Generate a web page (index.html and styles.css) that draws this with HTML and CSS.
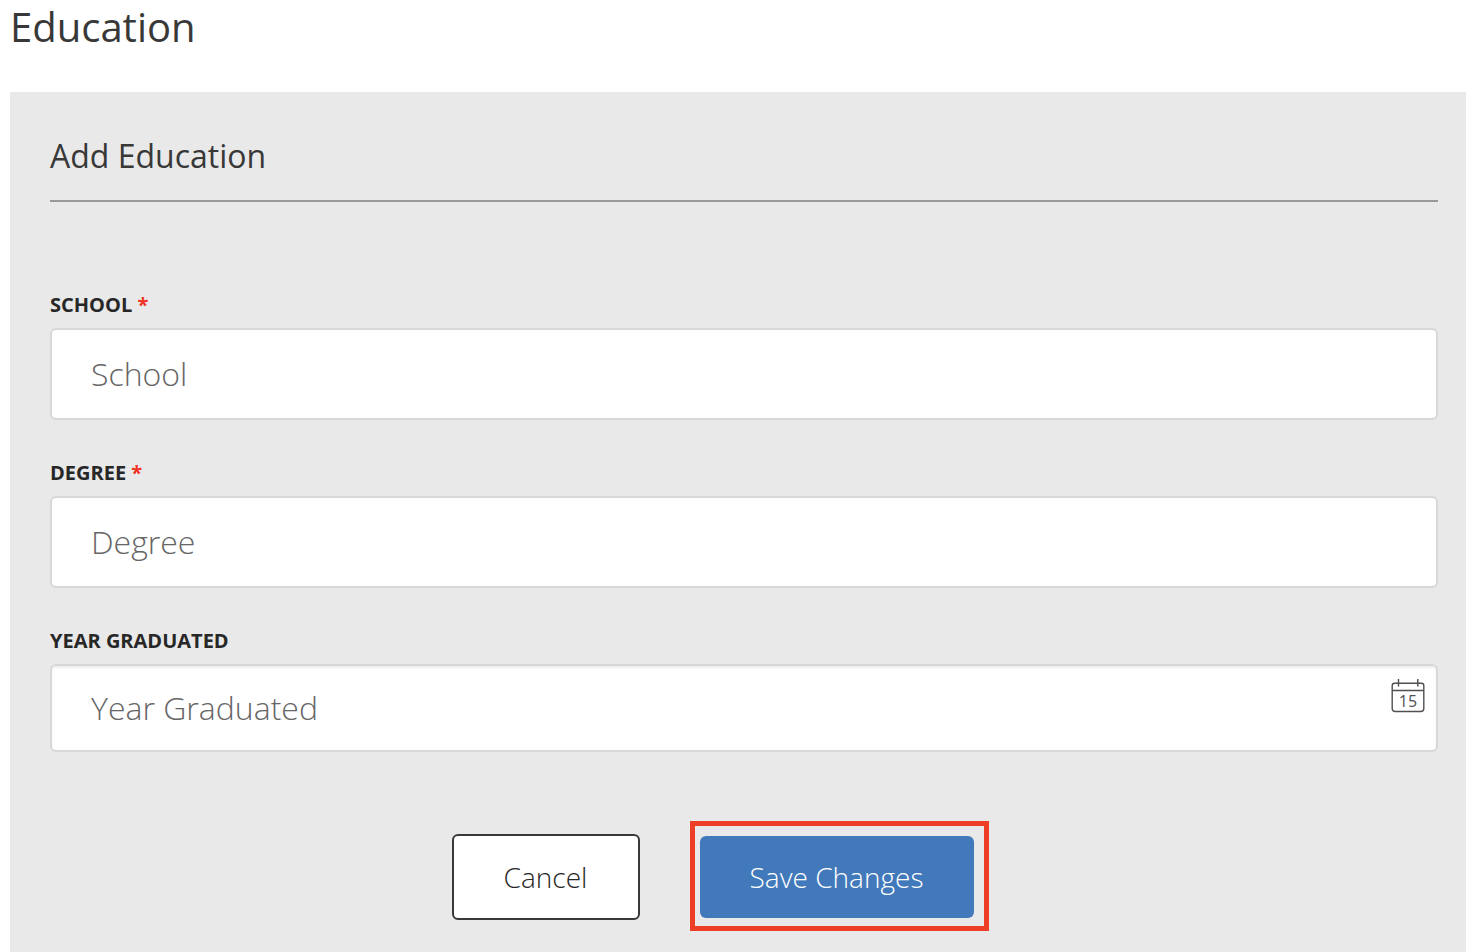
FILE: index.html
```html
<!DOCTYPE html>
<html lang="en">
<head>
<meta charset="utf-8">
<title>Education</title>
<link rel="stylesheet" href="styles.css">
</head>
<body>
<main class="page">
  <h1 class="page-title">Education</h1>
  <form class="panel">
    <h2 class="panel-title">Add Education</h2>
    <div class="field">
      <label class="label" for="school">SCHOOL <span class="required">*</span></label>
      <input class="input" id="school" type="text" placeholder="School">
    </div>
    <div class="field">
      <label class="label" for="degree">DEGREE <span class="required">*</span></label>
      <input class="input" id="degree" type="text" placeholder="Degree">
    </div>
    <div class="field">
      <label class="label" for="year">YEAR GRADUATED</label>
      <div class="date-box">
        <input class="input input-date" id="year" type="text" placeholder="Year Graduated">
        <button class="date-button" type="button" aria-label="Choose date">
          <svg class="calendar" viewBox="0 0 34 34" aria-hidden="true">
            <path d="M3.5 4.2H30.5Q32.8 4.2 32.8 6.5V29.5Q32.8 32.5 29.8 32.5H4.2Q1.2 32.5 1.2 29.5V6.5Q1.2 4.2 3.5 4.2ZM1 11.5H33M7.5 0V7.5M26.8 0V7.5" fill="none" stroke="#505050" stroke-width="1.4"/>
            <text class="calendar-day" x="17" y="28" text-anchor="middle">15</text>
          </svg>
        </button>
      </div>
    </div>
    <div class="actions">
      <button class="button cancel" type="button">Cancel</button>
      <div class="highlight"><button class="button save" type="submit">Save Changes</button></div>
    </div>
  </form>
</main>
</body>
</html>
```
FILE: styles.css
```css
* { box-sizing: border-box; }
body { margin: 0; background: #fff; color: #383838; font-family: "Open Sans", sans-serif; }
.page { display: flex; flex-direction: column; min-height: 100vh; padding-left: 10px; }
.page-title { margin: 0 0 38px; font-size: 40px; line-height: 54px; font-weight: 400; }
.panel { flex: 1; padding: 40px 28px 20px 40px; background: #e9e9e9; }
.panel-title { margin: 0 0 88px; padding-bottom: 20px; border-bottom: 2px solid #999; font-size: 32px; line-height: 48px; font-weight: 400; }
.field { margin-bottom: 38px; }
.label { display: block; height: 38px; font-size: 20px; line-height: 30px; font-weight: 700; color: #272727; }
.required { color: #f03224; }
.input { display: block; width: 100%; height: 92px; padding: 0 39px 2px; border: 2px solid #d8d8d8; border-radius: 6px; background: #fff; font: 300 32px "Open Sans", sans-serif; color: #383838; }
.input::placeholder { color: #666; opacity: 1; }
.date-box { position: relative; }
.input-date { height: 88px; box-shadow: inset 0 2px 2px #eee; }
.date-button { position: absolute; top: 15px; right: 13px; width: 34px; height: 34px; padding: 0; border: 0; background: none; }
.calendar { display: block; width: 34px; height: 34px; }
.calendar-day { font: 500 16px "Open Sans", sans-serif; fill: #505050; }
.actions { display: flex; justify-content: center; align-items: baseline; gap: 50px; margin-top: 69px; padding-right: 48px; }
.button { border-radius: 6px; font: 300 28px "Open Sans", sans-serif; }
.cancel { width: 188px; height: 86px; border: 2px solid #383838; background: #fff; color: #272727; }
.highlight { padding: 10px 10px 8px 5px; border: 5px solid #ed3e27; }
.save { display: block; width: 274px; height: 82px; border: 0; background: #4279bb; color: #fff; }
```
